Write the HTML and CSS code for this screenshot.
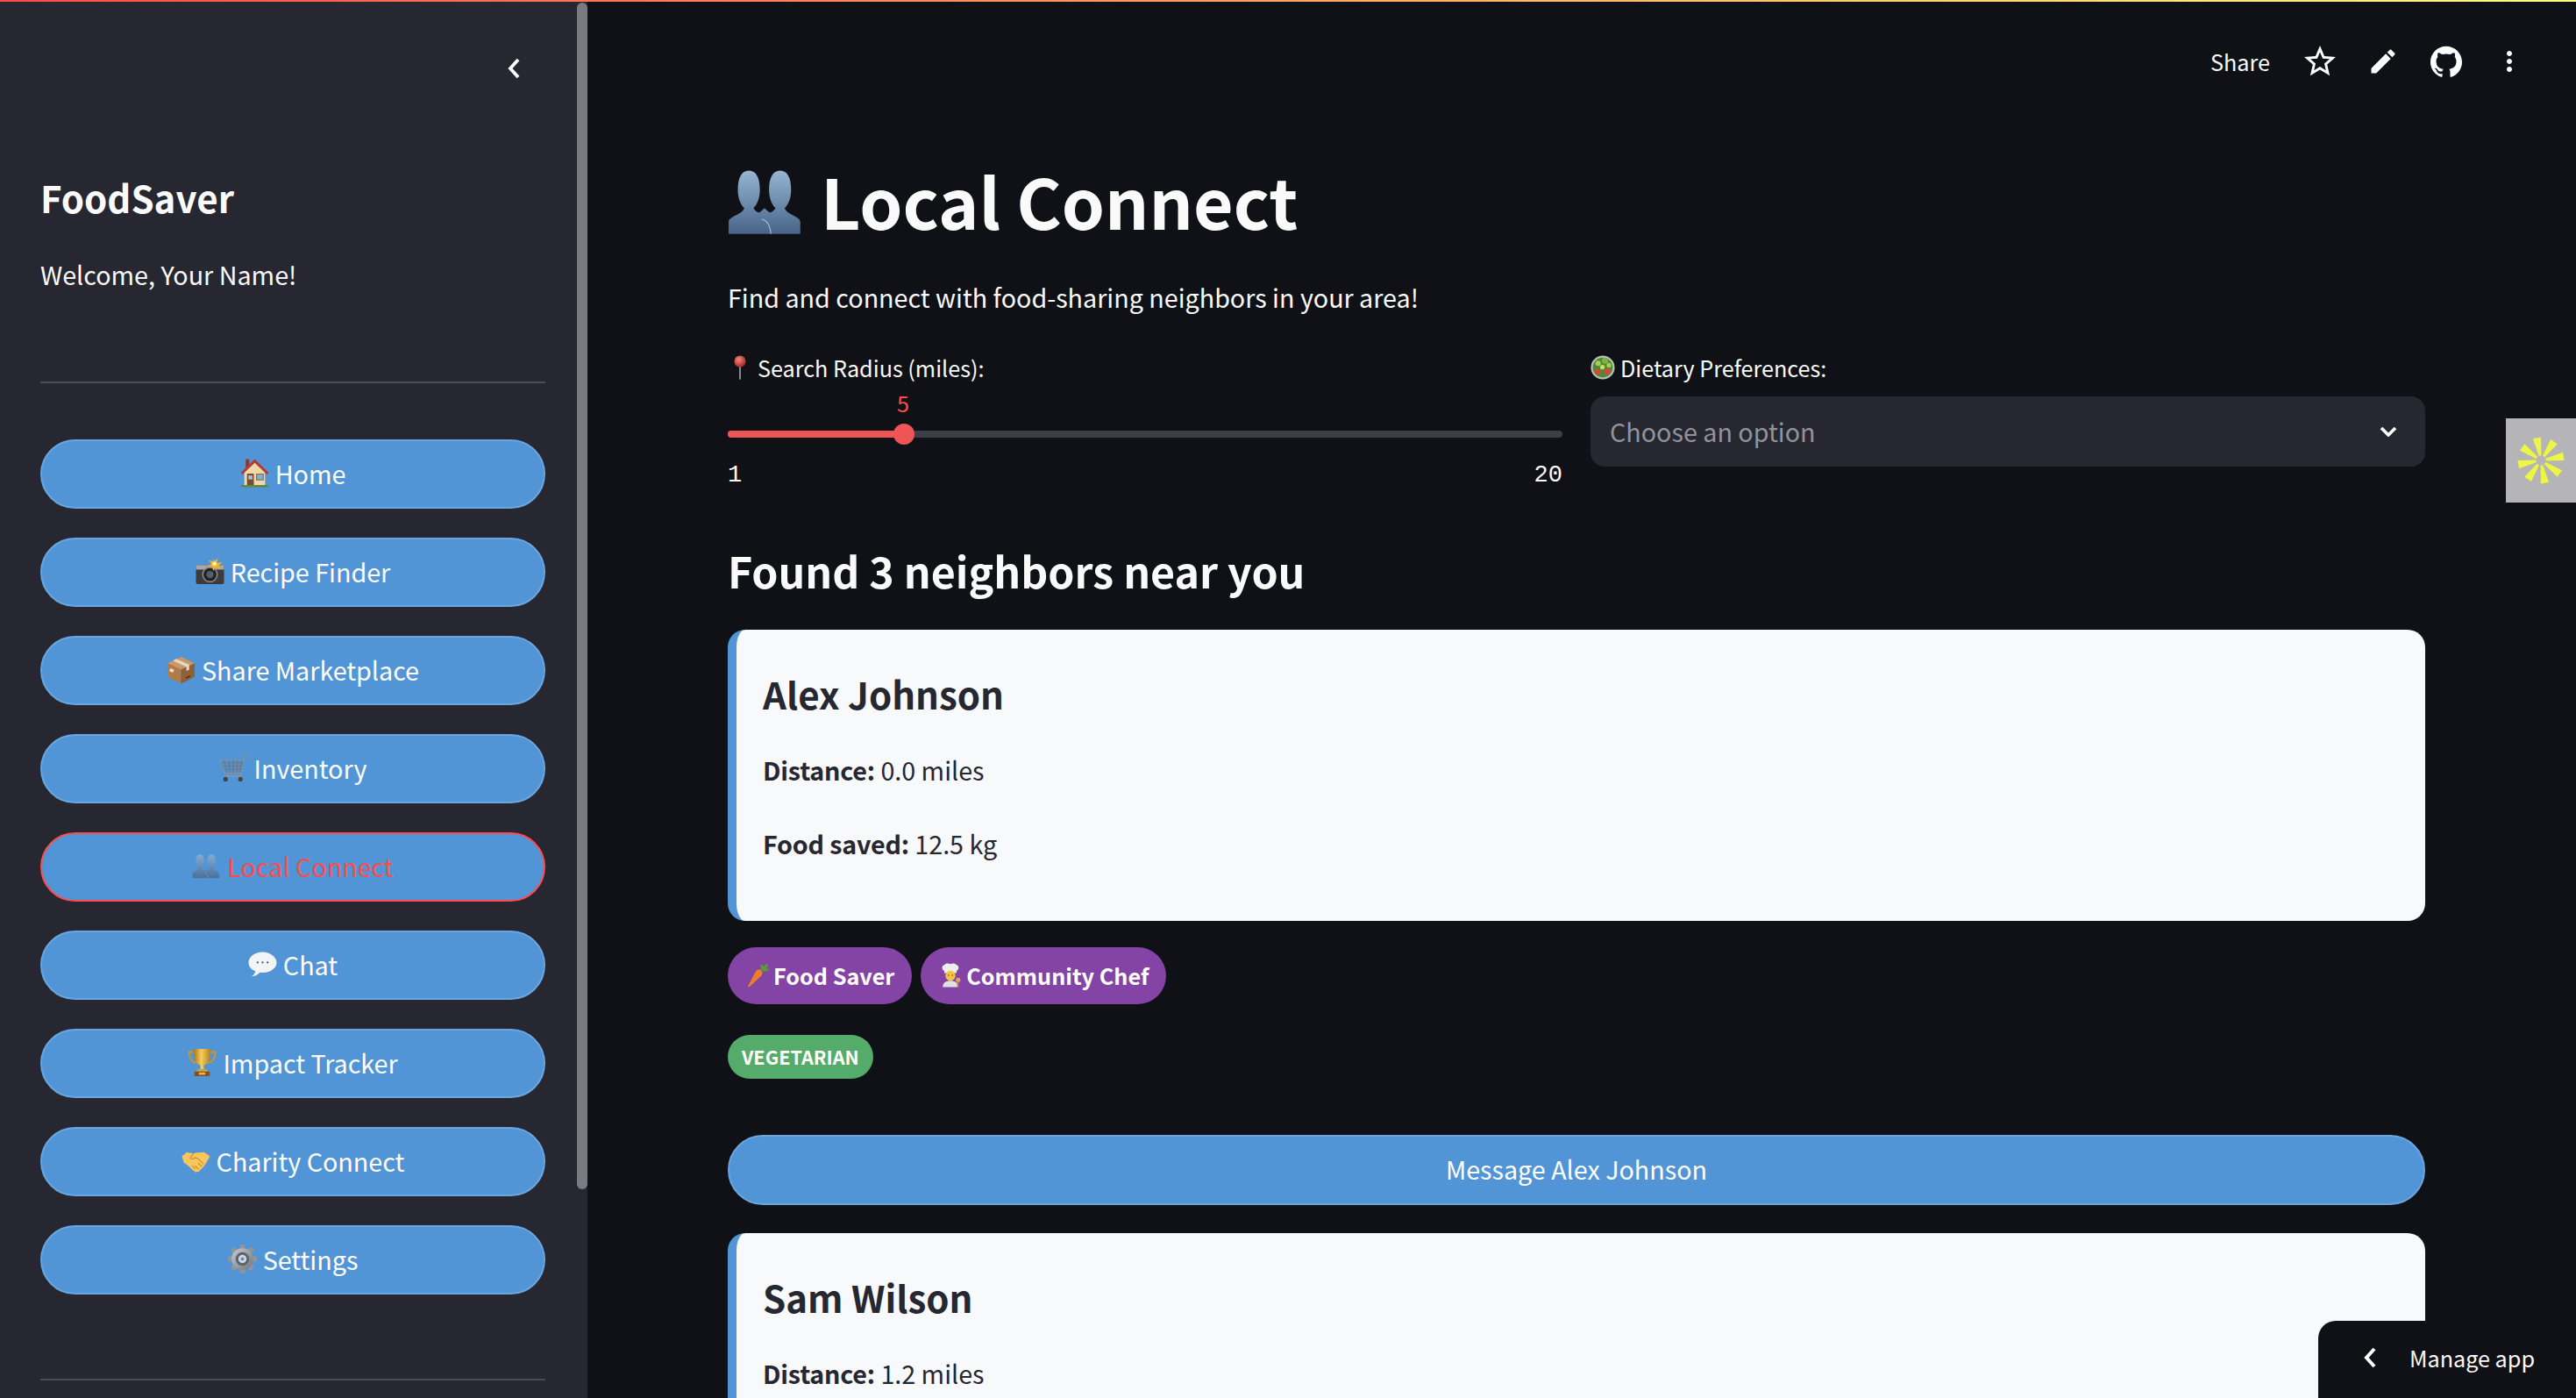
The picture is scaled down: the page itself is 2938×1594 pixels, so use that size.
FILE: index.html
```html
<!DOCTYPE html>
<html lang="en">
<head>
<meta charset="utf-8">
<title>Local Connect · FoodSaver</title>
<link rel="stylesheet" href="styles.css">
</head>
<body>
<svg class="defs" aria-hidden="true">
  <defs>
    <linearGradient id="bustGrad" x1="0" y1="0" x2="0" y2="1"><stop offset="0" stop-color="#96b5d3"/><stop offset="1" stop-color="#476488"/></linearGradient>
    <linearGradient id="gold" x1="0" y1="0" x2="1" y2="0"><stop offset="0" stop-color="#a8721a"/><stop offset=".45" stop-color="#f5cc5a"/><stop offset="1" stop-color="#b5801f"/></linearGradient>
    <linearGradient id="gearGrad" x1="0" y1="0" x2="1" y2="1"><stop offset="0" stop-color="#c8ccd0"/><stop offset="1" stop-color="#6f757b"/></linearGradient>
    <radialGradient id="pinHead" cx=".4" cy=".35" r=".7"><stop offset="0" stop-color="#f08a80"/><stop offset="1" stop-color="#a81f1c"/></radialGradient>
    <symbol id="e-busts" viewBox="0 0 84 70">
      <path fill="url(#bustGrad)" d="M1 70V57c0-6 15-8 17-15-4-4-7-11-7-20C11 9 15 1 23 1s12 8 12 21c0 9-3 16-7 20 1 2 3 4 6 5 2-1 4-3 6-5 2 2 4 4 6 5 3-1 5-3 6-5-4-4-7-11-7-20 0-13 4-21 12-21s12 8 12 21c0 9-3 16-7 20 2 7 17 9 17 15v13z"/>
      <path fill="none" stroke="#a9c4de" stroke-width="1" d="M37 54c6 1 9 6 10 16"/>
    </symbol>
    <symbol id="e-house" viewBox="0 0 64 64">
      <rect x="12" y="1" width="8" height="20" fill="#8c3a30"/>
      <path fill="#f0d8a8" d="M9 28 32 6l23 22v31H9z"/>
      <path fill="#b23c2e" d="M32 1 1 31l4 4L32 9l27 26 4-4z"/>
      <rect x="15" y="33" width="15" height="26" fill="#7a4a2c"/>
      <rect x="18" y="37" width="9" height="9" fill="#9cc4e0"/>
      <rect x="36" y="34" width="15" height="13" fill="#7db0d8" stroke="#8a6a44" stroke-width="2"/>
      <rect x="2" y="58" width="60" height="5" rx="2" fill="#5b8a3a"/>
    </symbol>
    <symbol id="e-camera" viewBox="0 0 64 64">
      <rect x="1" y="18" width="62" height="42" rx="4" fill="#3b3b3b"/>
      <rect x="1" y="18" width="62" height="10" fill="#a7a7a7"/>
      <circle cx="32" cy="39" r="16" fill="#222" stroke="#8e8e8e" stroke-width="3"/>
      <circle cx="32" cy="39" r="8" fill="#50606e"/>
      <path fill="#ffb020" d="m38 0 3 9 9-6-3 10 12-1-9 8 6 6-12-3-5 8-2-10-10 1 8-7-6-8 10 3z"/>
      <circle cx="42" cy="15" r="4.500" fill="#fff6c8"/>
    </symbol>
    <symbol id="e-box" viewBox="0 0 64 64">
      <path fill="#cc9762" d="M2 18 32 4l30 14-30 14z"/>
      <path fill="#b27c48" d="M2 18v30l30 15V32z"/>
      <path fill="#8f5f36" d="M62 18v30L32 63V32z"/>
      <path fill="#e6d8c0" d="m14 12 30 14v9l6-3V21L21 8z"/>
      <rect x="7" y="30" width="9" height="7" fill="#e9ddc8" transform="rotate(26 11 33)"/>
      <rect x="42" y="47" width="10" height="3" fill="#4b2e18" transform="rotate(-26 47 48)"/>
    </symbol>
    <symbol id="e-cart" viewBox="0 0 64 64">
      <g fill="none" stroke="#6d7883" stroke-width="2.200">
        <path stroke="#8b949d" d="M63 2 55 8 49 44H12L2 14h54"/>
        <path d="M5 21h49M7 28h46M9 35h43M11 14l6 30M21 14l3 30M31 14v30M41 14l-2 30M50 14l-4 30"/>
        <path stroke="#8b949d" stroke-width="3" d="M49 44l-1 7H10"/>
      </g>
      <circle cx="14" cy="57" r="5" fill="#444"/><circle cx="47" cy="57" r="5" fill="#444"/>
    </symbol>
    <symbol id="e-speech" viewBox="0 0 64 64">
      <path fill="#f3f4f5" d="M32 5C15 5 1 15 1 28c0 9 6 16 15 19-1 6-5 10-9 12 7 0 14-3 19-9 2 0 4 .5 6 .5 17 0 31-10 31-22S49 5 32 5z"/>
      <g fill="#555"><circle cx="21" cy="28" r="2.200"/><circle cx="32" cy="28" r="2.200"/><circle cx="43" cy="28" r="2.200"/></g>
    </symbol>
    <symbol id="e-trophy" viewBox="0 0 64 64">
      <path fill="none" stroke="#c8962a" stroke-width="4" d="M16 9H3c0 14 7 22 18 24M48 9h13c0 14-7 22-18 24"/>
      <path fill="url(#gold)" d="M13 2h38c0 20-4 32-15 36v9h-8v-9C17 34 13 22 13 2z"/>
      <rect x="21" y="47" width="22" height="5" fill="#d9a632"/>
      <rect x="15" y="52" width="34" height="10" rx="1" fill="#8a4f1e"/>
      <rect x="25" y="54" width="14" height="5" fill="#e5bb4c"/>
    </symbol>
    <symbol id="e-hands" viewBox="0 0 64 64">
      <path fill="#f7c65c" d="M1 22 12 13l14 3 7-2 17-1 13 9-9 16-6 8-10 10-7 1-7-5-10-10-9-6z"/>
      <path fill="none" stroke="#c78a20" stroke-width="2" d="M27 16 19 26c3 3 8 3 11-1l6 2 13 12M31 50l-7-7M38 51l-8-8M45 45l-8-8"/>
    </symbol>
    <symbol id="e-gear" viewBox="0 0 64 64">
      <g fill="#8f959b"><rect x="26" y="0" width="12" height="64" rx="2"/><rect x="26" y="0" width="12" height="64" rx="2" transform="rotate(45 32 32)"/><rect x="26" y="0" width="12" height="64" rx="2" transform="rotate(90 32 32)"/><rect x="26" y="0" width="12" height="64" rx="2" transform="rotate(135 32 32)"/></g>
      <circle cx="32" cy="32" r="24" fill="url(#gearGrad)"/>
      <circle cx="32" cy="32" r="15" fill="#5d646b"/>
      <circle cx="32" cy="32" r="9" fill="#d5dadf"/>
      <circle cx="32" cy="32" r="4" fill="#5094d6"/>
    </symbol>
    <symbol id="e-pin" viewBox="0 0 64 64">
      <rect x="30" y="26" width="4" height="37" fill="#9a9a9a"/>
      <ellipse cx="32" cy="16" rx="15" ry="15" fill="url(#pinHead)"/>
    </symbol>
    <symbol id="e-salad" viewBox="0 0 64 64">
      <circle cx="32" cy="32" r="31" fill="#b9c2b4"/>
      <circle cx="32" cy="32" r="26" fill="#4e8a34"/>
      <circle cx="38" cy="14" r="8" fill="#7fb24a"/><circle cx="20" cy="21" r="7" fill="#a6cc50"/><circle cx="48" cy="26" r="6" fill="#a6cc50"/>
      <circle cx="31" cy="31" r="6" fill="#c9dc6c"/>
      <circle cx="18" cy="43" r="7.500" fill="#d8453a"/><circle cx="44" cy="42" r="8" fill="#d8453a"/>
    </symbol>
    <symbol id="e-carrot" viewBox="0 0 64 64">
      <path fill="#ed7d2b" d="M40 18c-6-2-10 0-13 4L8 58c-2 4 1 6 4 3l30-28c4-5 3-12-2-15z"/>
      <path fill="#5b9a3c" d="M40 18c2-4 1-10-1-14 5 0 8 3 9 6 1-5 6-8 11-8 1 4-1 9-4 12 4 0 6 2 7 5-5 3-12 4-16 2z"/>
    </symbol>
    <symbol id="e-chef" viewBox="0 0 64 64">
      <path fill="#eee" d="M16 20c-7-1-8-13 0-15 3-5 12-5 16-2 5-3 13-2 16 2 8 2 6 14 0 15v6H16z"/>
      <circle cx="32" cy="33" r="13" fill="#f5c542"/>
      <circle cx="27" cy="32" r="1.600" fill="#4a3520"/><circle cx="37" cy="32" r="1.600" fill="#4a3520"/>
      <path fill="#dfe1e3" d="M12 63c0-12 8-17 20-17s20 5 20 17z"/>
      <circle cx="52" cy="44" r="6" fill="#d9a278"/><rect x="49" y="48" width="4" height="14" fill="#c08b60"/>
    </symbol>
  </defs>
</svg>

<div class="topbar"></div>
<div class="app">
  <aside class="sidebar">
    <div class="side-head">
      <svg class="chev" viewBox="0 0 14 24"><path d="M12 2 3 12l9 10" fill="none" stroke="#fff" stroke-width="3.8"/></svg>
    </div>
    <h2 class="brand">FoodSaver</h2>
    <p class="welcome">Welcome, Your Name!</p>
    <hr class="rule rule-top">
    <nav class="nav">
      <button class="btn"><svg class="emo"><use href="#e-house"/></svg>Home</button>
      <button class="btn"><svg class="emo"><use href="#e-camera"/></svg>Recipe Finder</button>
      <button class="btn"><svg class="emo"><use href="#e-box"/></svg>Share Marketplace</button>
      <button class="btn"><svg class="emo"><use href="#e-cart"/></svg>Inventory</button>
      <button class="btn btn-active"><svg class="emo"><use href="#e-busts"/></svg>Local Connect</button>
      <button class="btn"><svg class="emo"><use href="#e-speech"/></svg>Chat</button>
      <button class="btn"><svg class="emo"><use href="#e-trophy"/></svg>Impact Tracker</button>
      <button class="btn"><svg class="emo"><use href="#e-hands"/></svg>Charity Connect</button>
      <button class="btn"><svg class="emo"><use href="#e-gear"/></svg>Settings</button>
    </nav>
    <hr class="rule rule-bottom">
    <div class="scrollthumb"></div>
  </aside>

  <main class="main">
    <header class="toolbar">
      <span class="share">Share</span>
      <svg class="tool tool-star" viewBox="0 0 24 24"><path d="M22 9.24l-7.19-.62L12 2 9.19 8.63 2 9.24l5.46 4.73L5.82 21 12 17.27 18.18 21l-1.63-7.03L22 9.24zM12 15.4l-3.76 2.27 1-4.28-3.32-2.88 4.38-.38L12 6.1l1.71 4.04 4.38.38-3.32 2.88 1 4.28L12 15.4z"/></svg>
      <svg class="tool" viewBox="0 0 24 24"><path d="M3 17.25V21h3.75L17.81 9.94l-3.75-3.75L3 17.25zM20.71 7.04c.39-.39.39-1.02 0-1.41l-2.34-2.34c-.39-.39-1.02-.39-1.41 0l-1.83 1.83 3.75 3.75 1.83-1.83z"/></svg>
      <svg class="tool" viewBox="0 0 24 24"><path d="M12 .5C5.37.5 0 5.87 0 12.5c0 5.3 3.44 9.8 8.2 11.39.6.11.82-.26.82-.58v-2.03c-3.34.73-4.04-1.61-4.04-1.61-.55-1.39-1.33-1.76-1.33-1.76-1.09-.74.08-.73.08-.73 1.2.09 1.84 1.24 1.84 1.24 1.07 1.83 2.81 1.3 3.49 1 .11-.78.42-1.3.76-1.6-2.67-.3-5.47-1.33-5.47-5.93 0-1.31.47-2.38 1.24-3.22-.13-.3-.54-1.52.12-3.17 0 0 1-.32 3.3 1.23a11.5 11.5 0 0 1 6 0c2.3-1.55 3.3-1.23 3.3-1.23.66 1.65.25 2.87.12 3.17.77.84 1.24 1.91 1.24 3.22 0 4.61-2.81 5.62-5.48 5.92.43.37.81 1.1.81 2.22v3.29c0 .32.22.69.82.58A12 12 0 0 0 24 12.5C24 5.87 18.63.5 12 .5z"/></svg>
      <svg class="tool" viewBox="0 0 24 24"><path d="M12 8c1.1 0 2-.9 2-2s-.9-2-2-2-2 .9-2 2 .9 2 2 2zm0 2c-1.1 0-2 .9-2 2s.9 2 2 2 2-.9 2-2-.9-2-2-2zm0 6c-1.1 0-2 .9-2 2s.9 2 2 2 2-.9 2-2-.9-2-2-2z"/></svg>
    </header>

    <h1 class="title"><svg class="title-emo"><use href="#e-busts"/></svg>Local Connect</h1>
    <p class="lead">Find and connect with food-sharing neighbors in your area!</p>

    <section class="controls">
      <div class="control">
        <label class="label"><svg class="label-emo"><use href="#e-pin"/></svg>Search Radius (miles):</label>
        <div class="slider-value"><span class="value-mark">5</span></div>
        <div class="track"><div class="fill"></div><div class="thumb"></div></div>
        <div class="ticks"><span>1</span><span>20</span></div>
      </div>
      <div class="control">
        <label class="label"><svg class="label-emo"><use href="#e-salad"/></svg>Dietary Preferences:</label>
        <div class="select">
          <span>Choose an option</span>
          <svg class="select-chev" viewBox="0 0 20 12"><path d="M2 2l8 8 8-8" fill="none" stroke="#fff" stroke-width="3.6"/></svg>
        </div>
      </div>
    </section>

    <h2 class="found">Found 3 neighbors near you</h2>

    <article class="card">
      <h3 class="name">Alex Johnson</h3>
      <p class="fact"><b>Distance:</b> 0.0 miles</p>
      <p class="fact fact-next"><b>Food saved:</b> 12.5 kg</p>
    </article>

    <div class="badges">
      <span class="badge"><svg class="badge-emo"><use href="#e-carrot"/></svg>Food Saver</span>
      <span class="badge"><svg class="badge-emo"><use href="#e-chef"/></svg>Community Chef</span>
    </div>
    <div class="tags"><span class="tag">Vegetarian</span></div>

    <button class="btn btn-wide">Message Alex Johnson</button>

    <article class="card card-second">
      <h3 class="name">Sam Wilson</h3>
      <p class="fact"><b>Distance:</b> 1.2 miles</p>
    </article>

    <div class="widget">
      <svg class="spark" viewBox="0 0 60 60">
        <g fill="#edf545" transform="rotate(-10 30 30)">
          <path d="M28.500 24 25 2h10l-3.500 22z"/>
          <path d="M28.500 24 25 2h10l-3.500 22z" transform="rotate(45 30 30)"/>
          <path d="M28.500 24 25 2h10l-3.500 22z" transform="rotate(90 30 30)"/>
          <path d="M28.500 24 25 2h10l-3.500 22z" transform="rotate(135 30 30)"/>
          <path d="M28.500 24 25 2h10l-3.500 22z" transform="rotate(180 30 30)"/>
          <path d="M28.500 24 25 2h10l-3.500 22z" transform="rotate(225 30 30)"/>
          <path d="M28.500 24 25 2h10l-3.500 22z" transform="rotate(270 30 30)"/>
          <path d="M28.500 24 25 2h10l-3.500 22z" transform="rotate(315 30 30)"/>
        </g>
      </svg>
    </div>
    <div class="manage">
      <svg class="manage-chev" viewBox="0 0 14 24"><path d="M12 2 3 12l9 10" fill="none" stroke="#fff" stroke-width="4"/></svg>
      <span>Manage app</span>
    </div>
  </main>
</div>
</body>
</html>
```
FILE: styles.css
```css
* { box-sizing: border-box; }
html, body { margin: 0; height: 100%; }
body {
  background: #0f1116;
  color: #fafafa;
  font-family: "Noto Sans CJK SC", "Noto Sans", sans-serif;
  font-size: 28.7px;
  overflow: hidden;
}
.defs { position: absolute; width: 0; height: 0; }
.topbar { height: 2px; background: linear-gradient(90deg, #ff4b4b, #fffd80); }
.app { display: flex; height: 1592px; overflow: hidden; }

/* Sidebar */
.sidebar {
  position: relative;
  flex: 0 0 670px;
  background: #262730;
  padding: 0 48px 0 46px;
  overflow: hidden;
}
.side-head { display: flex; justify-content: flex-end; padding: 64px 29px 105px 0; }
.chev { width: 14px; height: 24px; display: block; }
.brand { margin: 0; font-size: 42px; font-weight: 600; line-height: 60px; }
.welcome { margin: 34px 0 0; line-height: 48px; }
.rule { border: 0; height: 2px; background: #4a4b55; margin: 0; }
.rule-top { margin-top: 98px; }
.rule-bottom { margin-top: 96px; }
.nav { display: flex; flex-direction: column; gap: 33px; margin-top: 64px; }
.scrollthumb {
  position: absolute; top: 1px; right: 0; width: 12px; height: 1353px;
  background: #7a7a82; border-radius: 6px;
}

/* Buttons */
.btn {
  display: flex; align-items: center; justify-content: center; gap: 7px;
  width: 100%; height: 79px;
  background: #5195d6; color: #fff;
  border: 2px solid #6aa6e0; border-radius: 40px;
  font: inherit; font-size: 28.7px; line-height: 40px; padding: 0 0 2px;
}
.btn-active { color: #ff4b4b; border-color: #ff4b4b; }
.btn-active .emo { opacity: .75; }
.emo { width: 33px; height: 33px; flex: none; }
.btn-wide { height: 80px; margin-top: 64px; }

/* Main */
.main { position: relative; flex: 1; padding: 0 172px 0 160px; overflow: hidden; }
.toolbar {
  display: flex; align-items: center; justify-content: flex-end;
  height: 136px; margin-right: -172px; padding-right: 58px; gap: 36px;
}
.share { font-size: 25.2px; line-height: 36px; margin-right: 3px; }
.tool { width: 36px; height: 36px; fill: #fff; }
.tool-star { transform: scale(1.2); }
.title {
  display: flex; align-items: center; gap: 18px;
  margin: 40px 0 0; font-size: 78.7px; font-weight: 700; line-height: 100px;
}
.title-emo { width: 88px; height: 74px; flex: none; margin-top: 4px; }
.lead { margin: 37px 0 0; line-height: 48px; }

.controls { display: grid; grid-template-columns: 1fr 1fr; gap: 32px; margin-top: 36px; }
.label { display: flex; align-items: center; gap: 6px; font-size: 25.2px; line-height: 40px; }
.label-emo { width: 28px; height: 28px; flex: none; }
.slider-value { position: relative; height: 30px; margin-top: 5px; }
.value-mark { position: absolute; left: 193px; top: 0; color: #ff4b4b; font-size: 25.2px; line-height: 30px; }
.track { position: relative; height: 8px; margin-top: 17px; background: #3d3e47; border-radius: 4px; }
.fill { height: 8px; width: 200px; background: #ee5555; border-radius: 4px; }
.thumb { position: absolute; left: 189px; top: -8px; width: 24px; height: 24px; background: #ee5555; border-radius: 50%; }
.ticks {
  display: flex; justify-content: space-between; margin-top: 25px;
  font-family: "Liberation Mono", monospace; font-size: 27px; line-height: 36px;
}
.select {
  display: flex; align-items: center; justify-content: space-between;
  height: 80px; margin-top: 13px; padding: 0 32px 0 22px;
  background: #262730; border-radius: 16px; color: #92949b; line-height: 48px;
}
.select-chev { width: 20px; height: 12px; }

.found { margin: 50px 0 0; font-size: 48.3px; font-weight: 600; line-height: 80px; }

.card {
  background: #f8f9fb; color: #262730;
  border-left: 10px solid #5195d6; border-radius: 20px;
  padding: 43px 30px 64px;
  margin-top: 28px;
}
.card-second { margin-top: 32px; padding-bottom: 120px; }
.name { margin: 0; font-size: 42px; font-weight: 600; line-height: 60px; }
.fact { margin: 33px 0 0; line-height: 48px; }
.fact-next { margin-top: 36px; }
.fact b { font-weight: 600; letter-spacing: -.2px; }

.badges { display: flex; gap: 10px; margin-top: 30px; }
.badge {
  display: inline-flex; align-items: center; gap: 4px;
  height: 65px; padding: 0 20px 2px;
  background: #8344a5; border-radius: 33px;
  font-size: 25.2px; font-weight: 700; color: #fff;
}
.badge-emo { width: 28px; height: 28px; flex: none; }
.tags { display: flex; margin-top: 35px; }
.tag {
  display: inline-flex; align-items: center;
  height: 50px; padding: 0 16px 2px;
  background: #55ab69; border-radius: 25px;
  font-size: 21.6px; font-weight: 700; color: #fff; text-transform: uppercase;
}

.widget {
  position: absolute; top: 475px; right: 0; width: 80px; height: 96px;
  display: flex; align-items: center; justify-content: center;
  background: #b5b5b7;
}
.spark { width: 56px; height: 56px; }
.manage {
  position: absolute; right: 0; bottom: 0; width: 294px; height: 88px;
  display: flex; align-items: center; gap: 36px; padding: 0 0 4px 50px;
  background: #0f1116; border-top-left-radius: 20px;
  font-size: 25.2px; line-height: 36px;
}
.manage-chev { width: 18px; height: 24px; flex: none; }
```
